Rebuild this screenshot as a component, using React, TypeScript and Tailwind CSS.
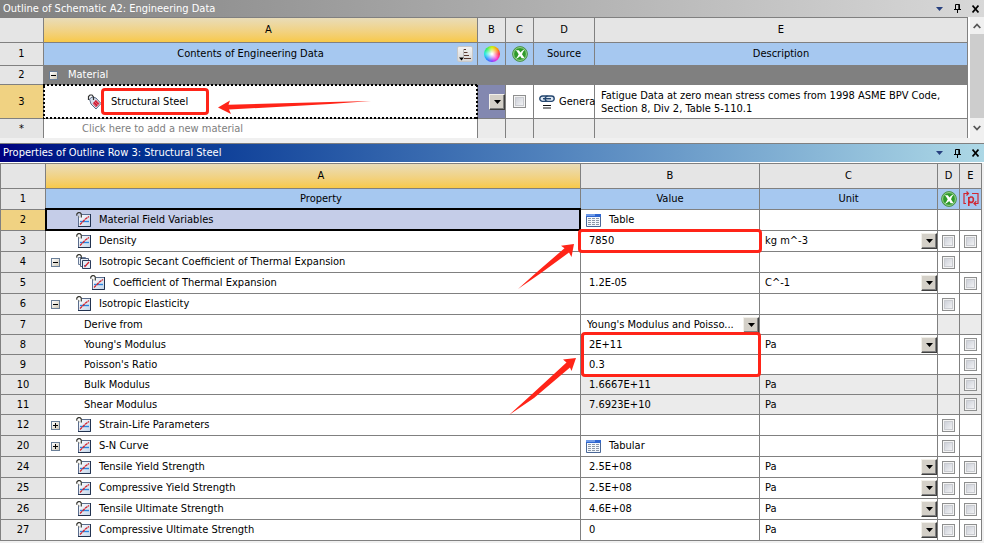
import React, { useState } from 'react';
import { clsx } from 'clsx';

type Row = {
  no: number;
  name: string;
  indent: number;
  icon?: 'curve' | 'stack';
  expander?: '+' | '-';
  value?: string;
  valueKind?: 'table' | 'select';
  unit?: string;
  unitSelect?: boolean;
  suppress?: boolean;
  param?: boolean;
  readOnly?: boolean;
  short?: boolean;
};

const rows: Row[] = [
  { no: 2, name: 'Material Field Variables', indent: 0, icon: 'curve', value: 'Table', valueKind: 'table' },
  { no: 3, name: 'Density', indent: 0, icon: 'curve', value: '7850', unit: 'kg m^-3', unitSelect: true, suppress: true, param: true },
  { no: 4, name: 'Isotropic Secant Coefficient of Thermal Expansion', indent: 0, icon: 'stack', expander: '-', suppress: true },
  { no: 5, name: 'Coefficient of Thermal Expansion', indent: 1, icon: 'curve', value: '1.2E-05', unit: 'C^-1', unitSelect: true, param: true },
  { no: 6, name: 'Isotropic Elasticity', indent: 0, icon: 'curve', expander: '-', suppress: true },
  { no: 7, name: 'Derive from', indent: 0, value: "Young's Modulus and Poisso...", valueKind: 'select', short: true },
  { no: 8, name: "Young's Modulus", indent: 0, value: '2E+11', unit: 'Pa', unitSelect: true, param: true, short: true },
  { no: 9, name: "Poisson's Ratio", indent: 0, value: '0.3', param: true, short: true },
  { no: 10, name: 'Bulk Modulus', indent: 0, value: '1.6667E+11', unit: 'Pa', param: true, readOnly: true, short: true },
  { no: 11, name: 'Shear Modulus', indent: 0, value: '7.6923E+10', unit: 'Pa', param: true, readOnly: true, short: true },
  { no: 12, name: 'Strain-Life Parameters', indent: 0, icon: 'curve', expander: '+', suppress: true },
  { no: 20, name: 'S-N Curve', indent: 0, icon: 'curve', expander: '+', value: 'Tabular', valueKind: 'table', suppress: true },
  { no: 24, name: 'Tensile Yield Strength', indent: 0, icon: 'curve', value: '2.5E+08', unit: 'Pa', unitSelect: true, suppress: true, param: true },
  { no: 25, name: 'Compressive Yield Strength', indent: 0, icon: 'curve', value: '2.5E+08', unit: 'Pa', unitSelect: true, suppress: true, param: true },
  { no: 26, name: 'Tensile Ultimate Strength', indent: 0, icon: 'curve', value: '4.6E+08', unit: 'Pa', unitSelect: true, suppress: true, param: true },
  { no: 27, name: 'Compressive Ultimate Strength', indent: 0, icon: 'curve', value: '0', unit: 'Pa', unitSelect: true, suppress: true, param: true },
];

const cell = 'relative border-r border-b border-[#808080] p-0 font-normal';
const gold = 'bg-linear-to-b from-[#e9dcb8] to-[#f8c947]';
const blue = 'bg-[#a6c8f0]';
const gray = 'bg-[#e5e5e5]';

const CurveIcon = () => (
  <svg width="16" height="16" viewBox="0 0 16 16" className="shrink-0">
    <defs>
      <linearGradient id="curveFill" x1="0" y1="0" x2="1" y2="1">
        <stop offset="0" stopColor="#ffffff" />
        <stop offset="1" stopColor="#c3d5ea" />
      </linearGradient>
    </defs>
    <path d="M2.5 4.5V14.5H14.5V2.5H6" fill="url(#curveFill)" stroke="#5a6c8c" />
    <path d="M14.5 2V14.5H2" fill="none" stroke="#22324f" />
    <path d="M4 9.5H13" stroke="#2a84e0" strokeWidth="1.4" />
    <path d="M4 12.5L6.5 10L9.5 7L13 4.5" fill="none" stroke="#d3232c" strokeWidth="1.3" strokeDasharray="3 .6" />
    <path d="M.8 3.8V2L2.2.7H4L5.3 2V5.5" fill="none" stroke="#3a3a34" strokeWidth="1.2" />
    <path d="M2 4L3.5 5" stroke="#77776c" />
  </svg>
);

const StackIcon = () => (
  <svg width="16" height="16" viewBox="0 0 16 16" className="shrink-0">
    <path d="M2.5 3.5H9.5V10.5H2.5Z" fill="#e9f0f8" stroke="#6a7b98" />
    <path d="M4.5 4.5H12.5V12.5H4.5Z" fill="#e9f0f8" stroke="#4d5f80" />
    <path d="M6.5 6.5H14.5V14.5H6.5Z" fill="#e3edf8" stroke="#2b3c5c" />
    <path d="M8 11.5H10" stroke="#2a84e0" />
    <path d="M8.5 13L13 8" stroke="#d3232c" strokeWidth="1.2" />
    <path d="M.8 3.8V2L2.2.7H4L5.3 2V5" fill="none" stroke="#3a3a34" strokeWidth="1.2" />
  </svg>
);

const TableIcon = () => (
  <svg width="15" height="13" viewBox="0 0 15 13" className="shrink-0">
    <path d="M.5.5H14.5V12.5H.5Z" fill="#f4f8fd" stroke="#4a6797" />
    <path d="M0 0H15V3H0Z" fill="#2f66d0" />
    <path d="M0 0H9V2H0Z" fill="#6f9be8" />
    <path d="M2 4.5H13M2 6.5H13M2 8.5H13M2 10.5H13" stroke="#8b97a8" strokeDasharray="3 1" />
  </svg>
);

const TagIcon = () => (
  <svg width="16" height="16" viewBox="0 0 16 16" className="shrink-0">
    <path d="M2.5 5L5 3L9 4L14 9.5L9 15L4 10Z" fill="#d9e1ee" stroke="#5b6b86" />
    <path d="M9 5.8L12.6 9.5L9 13.2L5.6 9.5Z" fill="#d02038" />
    <path d="M7.5 7.5L11 11M9 6L12 9.5M6 9L9.5 12.5" stroke="#f3c6cf" strokeWidth=".4" />
    <path d="M1.5 6V2.5L3 1H5L6.5 3V6" fill="none" stroke="#333" strokeWidth="1.2" />
  </svg>
);

const LinkIcon = () => (
  <svg width="16" height="14" viewBox="0 0 16 14" className="shrink-0">
    <rect x=".8" y="1" width="9" height="5.4" rx="2.7" fill="#dfe9f5" stroke="#25476f" strokeWidth="1.4" />
    <rect x="6.2" y="1" width="9" height="5.4" rx="2.7" fill="#dfe9f5" stroke="#25476f" strokeWidth="1.4" />
    <path d="M4 3.7H12" stroke="#25476f" strokeWidth="1.4" />
    <path d="M4 10.5H12M4 13H12" stroke="#111" />
  </svg>
);

const SuppressIcon = () => (
  <svg width="16" height="16" viewBox="0 0 16 16" className="mx-auto block">
    <circle cx="8" cy="8" r="7.4" fill="#2f9a2b" stroke="#4f9450" />
    <circle cx="8" cy="8" r="6.4" fill="none" stroke="#b9e3ae" strokeWidth=".8" />
    <path d="M3.6 4.2H6.8C7.6 5 8.1 5.8 8.6 6.6C9.4 5.2 10.6 4.1 12.6 3.6C11.4 5 10.6 6.6 10 8.2L12.6 12.2H9.6L8.2 10C7.2 11.2 6 12.2 3.9 12.8C5.2 11.4 6 9.9 6.7 8.3C5.8 6.6 5 5.3 3.6 4.2Z" fill="#fff" />
  </svg>
);

const ParamIcon = () => (
  <svg width="16" height="16" viewBox="0 0 16 16" className="mx-auto block">
    <g fill="none" stroke="#cf2733" strokeWidth="1.2">
      <path d="M3 12.5H1V2.5H5M3.5.5L5.5 2.5L3.5 4.5" />
      <path d="M9 2.5H15V12.5H11.5M13.3 10.3L11 12.5L13.3 14.6" />
      <path d="M5.8 15V6M5.8 7.5L7.5 6H9L10.3 7.3V10L9 11.4H7.3L5.8 10" strokeWidth="1.6" />
    </g>
  </svg>
);

const Expander = ({ sign, label }: { sign: '+' | '-'; label: string }) => (
  <button
    type="button"
    aria-label={label}
    className="block size-[9px] shrink-0 border border-[#6a7f98] bg-linear-to-br from-white to-[#cfc9b8]"
  >
    <svg width="7" height="7" viewBox="0 0 7 7" className="block">
      <path d={sign === '+' ? 'M1 3.5H6M3.5 1V6' : 'M1 3.5H6'} stroke="#000" />
    </svg>
  </button>
);

const Check = ({ label }: { label: string }) => {
  const [on, setOn] = useState(false);
  return (
    <input
      type="checkbox"
      aria-label={label}
      checked={on}
      onChange={(e) => setOn(e.target.checked)}
      className="mx-auto block size-[13px] appearance-none border border-[#8e8f8f] bg-linear-to-br from-[#c4c8d2] to-[#fbfbfb] shadow-[inset_0_0_0_1px_#f4f4f4,inset_0_0_0_2px_#c9cbd0] checked:bg-[#4b6ea8]"
    />
  );
};

// Old Windows style combo box: flat text with a raised arrow at the right
const Combo = ({ label, options, className }: { label: string; options: string[]; className?: string }) => (
  <div className="relative">
    <select aria-label={label} className={clsx('block w-full appearance-none outline-none', className)}>
      {options.map((o) => (
        <option key={o}>{o}</option>
      ))}
    </select>
    <span className="pointer-events-none absolute top-1/2 right-0 flex size-4 -translate-y-1/2 items-center justify-center border border-t-[#f2f0ea] border-r-[#404040] border-b-[#404040] border-l-[#f2f0ea] bg-[#d4d0c8] shadow-[inset_-1px_-1px_0_#808080]">
      <svg width="7" height="4" viewBox="0 0 7 4">
        <path d="M0 0H7L3.5 4Z" fill="#000" />
      </svg>
    </span>
  </div>
);

const TitleButtons = () => (
  <div className="flex items-center gap-[6px]">
    <button type="button" aria-label="Menu" className="flex size-3 items-center justify-center">
      <svg width="7" height="4" viewBox="0 0 7 4">
        <path d="M0 0H7L3.5 4Z" fill="#27407f" />
      </svg>
    </button>
    <button type="button" aria-label="Pin" className="flex size-3 items-center justify-center">
      <svg width="7" height="9" viewBox="0 0 7 9">
        <path d="M1.5 5V.5H5.5V5M4.8 0V5M0 5.5H7M3.5 6V9" fill="none" stroke="#000" />
      </svg>
    </button>
    <button type="button" aria-label="Close" className="flex size-3 items-center justify-center">
      <svg width="7" height="8" viewBox="0 0 7 8">
        <path d="M.5.5L6.5 7.5M6.5.5L.5 7.5" stroke="#000" strokeWidth="1.7" />
      </svg>
    </button>
  </div>
);

const RedBox = ({ className }: { className: string }) => (
  <span className={clsx('pointer-events-none absolute z-10 rounded-sm border-3 border-[#ff2418]', className)} />
);

const Arrow = ({ points, className, width, height }: { points: string; className: string; width: number; height: number }) => (
  <svg
    width={width}
    height={height}
    viewBox={`0 0 ${width} ${height}`}
    className={clsx('pointer-events-none absolute z-10', className)}
  >
    <polygon points={points} fill="#ff2418" />
  </svg>
);

const OutlinePanel = () => (
  <section>
    <header className="flex h-[17px] items-center justify-between bg-linear-to-r from-[#808080] to-[#d8d8d8] px-[3px]">
      <h2 className="text-white">Outline of Schematic A2: Engineering Data</h2>
      <TitleButtons />
    </header>
    <div className="flex bg-white">
      <div className="min-w-0 flex-1">
        <table className="w-full table-fixed border-separate border-spacing-0 border-t border-[#808080]">
          <colgroup>
            <col className="w-11" />
            <col className="w-[434px]" />
            <col className="w-7" />
            <col className="w-7" />
            <col className="w-[61px]" />
            <col />
          </colgroup>
          <thead>
            <tr className="h-[25px]">
              <td className={clsx(cell, gray)} />
              <th className={clsx(cell, gold, 'pl-4')}>A</th>
              <th className={clsx(cell, gray)}>B</th>
              <th className={clsx(cell, gray)}>C</th>
              <th className={clsx(cell, gray)}>D</th>
              <th className={clsx(cell, gray)}>E</th>
            </tr>
            <tr className="h-[23px]">
              <th className={clsx(cell, gray)}>1</th>
              <th className={clsx(cell, blue)}>
                <div className="flex items-center pr-1">
                  <span className="flex-1">Contents of Engineering Data</span>
                  <button
                    type="button"
                    aria-label="Sort"
                    className="flex size-4 items-center justify-center rounded-xs border border-[#c8c8c8] bg-linear-to-b from-[#f4f4f4] to-[#d8d8d8]"
                  >
                    <svg width="12" height="13" viewBox="0 0 12 13">
                      <path d="M5 1.5H7M5 4.5H8.5M5 7.5H10M5 10.5H12" stroke="#5a3a30" />
                      <path d="M4.5 1V9" stroke="#bbb" />
                      <path d="M0 9.5H5L2.5 12.5Z" fill="#000" />
                    </svg>
                  </button>
                </div>
              </th>
              <th className={clsx(cell, blue)}>
                <span className="mx-auto block size-4 rounded-full bg-[radial-gradient(circle,#fff_5%,transparent_65%),conic-gradient(#c8f000,#ff9a00,#ff2a4a,#ff30d0,#8040ff,#2090ff,#20e8e0,#30f060,#c8f000)]" />
              </th>
              <th className={clsx(cell, blue)}>
                <SuppressIcon />
              </th>
              <th className={clsx(cell, blue)}>Source</th>
              <th className={clsx(cell, blue)}>Description</th>
            </tr>
          </thead>
          <tbody>
            <tr className="h-[19px]">
              <th className={clsx(cell, gray)}>2</th>
              <td colSpan={5} className={clsx(cell, 'bg-[#808080] text-white')}>
                <div className="flex items-center gap-[10px] pl-[5px]">
                  <Expander sign="-" label="Collapse Material" />
                  Material
                </div>
              </td>
            </tr>
            <tr className="h-[34px]">
              <th className={clsx(cell, 'bg-[#f0d282]')}>3</th>
              <td className={clsx(cell, 'bg-white')}>
                <div className="flex items-center gap-2 pl-[43px]">
                  <TagIcon />
                  Structural Steel
                </div>
                <svg className="pointer-events-none absolute -inset-px h-[calc(100%+2px)] w-[calc(100%+2px)]">
                  <rect x="0" y="0" width="100%" height="100%" fill="none" stroke="#000" strokeWidth="4" strokeDasharray="2 2" />
                </svg>
                <RedBox className="top-[3px] left-[57px] h-[27px] w-[108px]" />
                <Arrow
                  className="top-[15px] left-[174px]"
                  width={156}
                  height={16}
                  points="0,7.5 12,.5 10.5,4.8 112,2 153,1 112,4 11,9.6 13,14"
                />
              </td>
              <td className={clsx(cell, 'bg-[#8388b0]')}>
                <Combo label="Colour" options={['']} />
              </td>
              <td className={clsx(cell, 'bg-white')}>
                <Check label="Suppress Structural Steel" />
              </td>
              <td className={clsx(cell, 'bg-white')}>
                <div className="flex items-center gap-1 pl-[5px] whitespace-nowrap">
                  <LinkIcon />
                  Genera
                </div>
              </td>
              <td className={clsx(cell, 'bg-white pl-[6px] leading-[13px]')}>
                Fatigue Data at zero mean stress comes from 1998 ASME BPV Code,
                <br />
                Section 8, Div 2, Table 5-110.1
              </td>
            </tr>
            <tr className="h-[19px]">
              <th className={clsx(cell, gray, 'border-b-0')}>*</th>
              <td className={clsx(cell, 'border-b-0 bg-white pl-[38px] text-[#808080]')}>Click here to add a new material</td>
              <td className={clsx(cell, 'border-b-0 bg-[#ebebeb]')} />
              <td className={clsx(cell, 'border-b-0 bg-[#ebebeb]')} />
              <td className={clsx(cell, 'border-b-0 bg-[#ebebeb]')} />
              <td className={clsx(cell, 'border-b-0 bg-[#ebebeb]')} />
            </tr>
          </tbody>
        </table>
      </div>
      <div className="ml-[2px] flex w-[14px] flex-col bg-[#f0f0f0] pt-px">
        <button type="button" aria-label="Scroll up" className="flex h-4 items-center justify-center">
          <svg width="8" height="6" viewBox="0 0 8 6">
            <path d="M.7 5L4 1.5L7.3 5" fill="none" stroke="#555" strokeWidth="1.8" />
          </svg>
        </button>
        <div className="flex-1 bg-[#cdcdcd]" />
        <button type="button" aria-label="Scroll down" className="flex h-5 items-center justify-center">
          <svg width="8" height="6" viewBox="0 0 8 6">
            <path d="M.7 1L4 4.5L7.3 1" fill="none" stroke="#555" strokeWidth="1.8" />
          </svg>
        </button>
      </div>
    </div>
  </section>
);

const PropertyRow = ({ row }: { row: Row }) => {
  const selected = row.no === 2;
  const shade = row.readOnly ? 'bg-[#ebebeb]' : 'bg-white';
  const flagShade = row.readOnly || row.no === 7 ? 'bg-[#ebebeb]' : 'bg-white';

  return (
    <tr className={row.short ? 'h-5' : 'h-[21px]'}>
      <th className={clsx(cell, 'border-l', selected ? 'bg-[#f0d282]' : gray)}>{row.no}</th>
      <td className={clsx(cell, selected ? 'bg-[#c5cde8]' : 'bg-white')}>
        <div className={clsx('flex items-center', row.indent ? 'pl-11' : row.expander ? 'pl-[5px]' : row.icon ? 'pl-[30px]' : 'pl-[38px]')}>
          {row.expander && (
            <span className="mr-4">
              <Expander sign={row.expander} label={`Toggle ${row.name}`} />
            </span>
          )}
          {row.icon && <span className="mr-[7px]">{row.icon === 'stack' ? <StackIcon /> : <CurveIcon />}</span>}
          {row.name}
        </div>
        {selected && <span className="pointer-events-none absolute -inset-x-px -top-[2px] -bottom-px z-10 border-2 border-black" />}
        {row.no === 3 && (
          <Arrow
            className="top-[10px] -right-px"
            width={64}
            height={52}
            points="57,3 44,4.8 47.5,7.2 20,31 1,48 24,32 52,11.5 54.5,16"
          />
        )}
        {row.no === 8 && (
          <Arrow
            className="top-[20px] -right-px"
            width={73}
            height={64}
            points="68,3 55,4.5 58.5,7.5 22,41 1,60 26,43 62,12.5 63.5,16"
          />
        )}
      </td>
      <td className={clsx(cell, shade)}>
        {row.valueKind === 'table' && (
          <div className="flex items-center gap-2 pl-[5px]">
            <TableIcon />
            {row.value}
          </div>
        )}
        {row.valueKind === 'select' && <Combo label={row.name} options={[row.value || '']} className="pl-[6px]" />}
        {!row.valueKind && <span className="pl-2">{row.value}</span>}
        {row.no === 3 && <RedBox className="-inset-x-[3px] -inset-y-[2px]" />}
        {row.no === 8 && <RedBox className="-top-[3px] -right-[2px] left-0 h-[45px]" />}
      </td>
      <td className={clsx(cell, shade)}>
        {row.unitSelect ? (
          <Combo label={`${row.name} unit`} options={[row.unit || '']} className="pl-[5px]" />
        ) : (
          <span className="pl-[5px]">{row.unit}</span>
        )}
      </td>
      <td className={clsx(cell, flagShade)}>{row.suppress && <Check label={`Suppress ${row.name}`} />}</td>
      <td className={clsx(cell, flagShade)}>{row.param && <Check label={`Parameterize ${row.name}`} />}</td>
    </tr>
  );
};

const PropertiesPanel = () => (
  <section className="mt-[5px]">
    <header className="flex h-5 items-center justify-between border-t border-b border-t-[#808080] border-b-white bg-linear-to-r from-[#000080] to-[#add8e6] px-[3px]">
      <h2 className="text-white">Properties of Outline Row 3: Structural Steel</h2>
      <TitleButtons />
    </header>
    <div className="pr-[2px]">
      <table className="w-full table-fixed border-separate border-spacing-0 border-t border-[#808080]">
        <colgroup>
          <col className="w-[46px]" />
          <col />
          <col className="w-[179px]" />
          <col className="w-[178px]" />
          <col className="w-[22px]" />
          <col className="w-[22px]" />
        </colgroup>
        <thead>
          <tr className="h-[25px]">
            <td className={clsx(cell, gray, 'border-l')} />
            <th className={clsx(cell, gold, 'pl-4')}>A</th>
            <th className={clsx(cell, gray)}>B</th>
            <th className={clsx(cell, gray)}>C</th>
            <th className={clsx(cell, gray)}>D</th>
            <th className={clsx(cell, gray)}>E</th>
          </tr>
          <tr className="h-[21px]">
            <th className={clsx(cell, gray, 'border-l')}>1</th>
            <th className={clsx(cell, blue, 'pl-4')}>Property</th>
            <th className={clsx(cell, blue)}>Value</th>
            <th className={clsx(cell, blue)}>Unit</th>
            <th className={clsx(cell, blue)}>
              <SuppressIcon />
            </th>
            <th className={clsx(cell, blue)}>
              <ParamIcon />
            </th>
          </tr>
        </thead>
        <tbody>
          {rows.map((row) => (
            <PropertyRow key={row.no} row={row} />
          ))}
        </tbody>
      </table>
    </div>
  </section>
);

export default function App() {
  return (
    <main className="min-h-screen bg-[#f0f0f0] font-[DejaVu_Sans_Condensed,Noto_Sans,sans-serif] text-[11px] leading-4 text-black">
      <OutlinePanel />
      <PropertiesPanel />
    </main>
  );
}
